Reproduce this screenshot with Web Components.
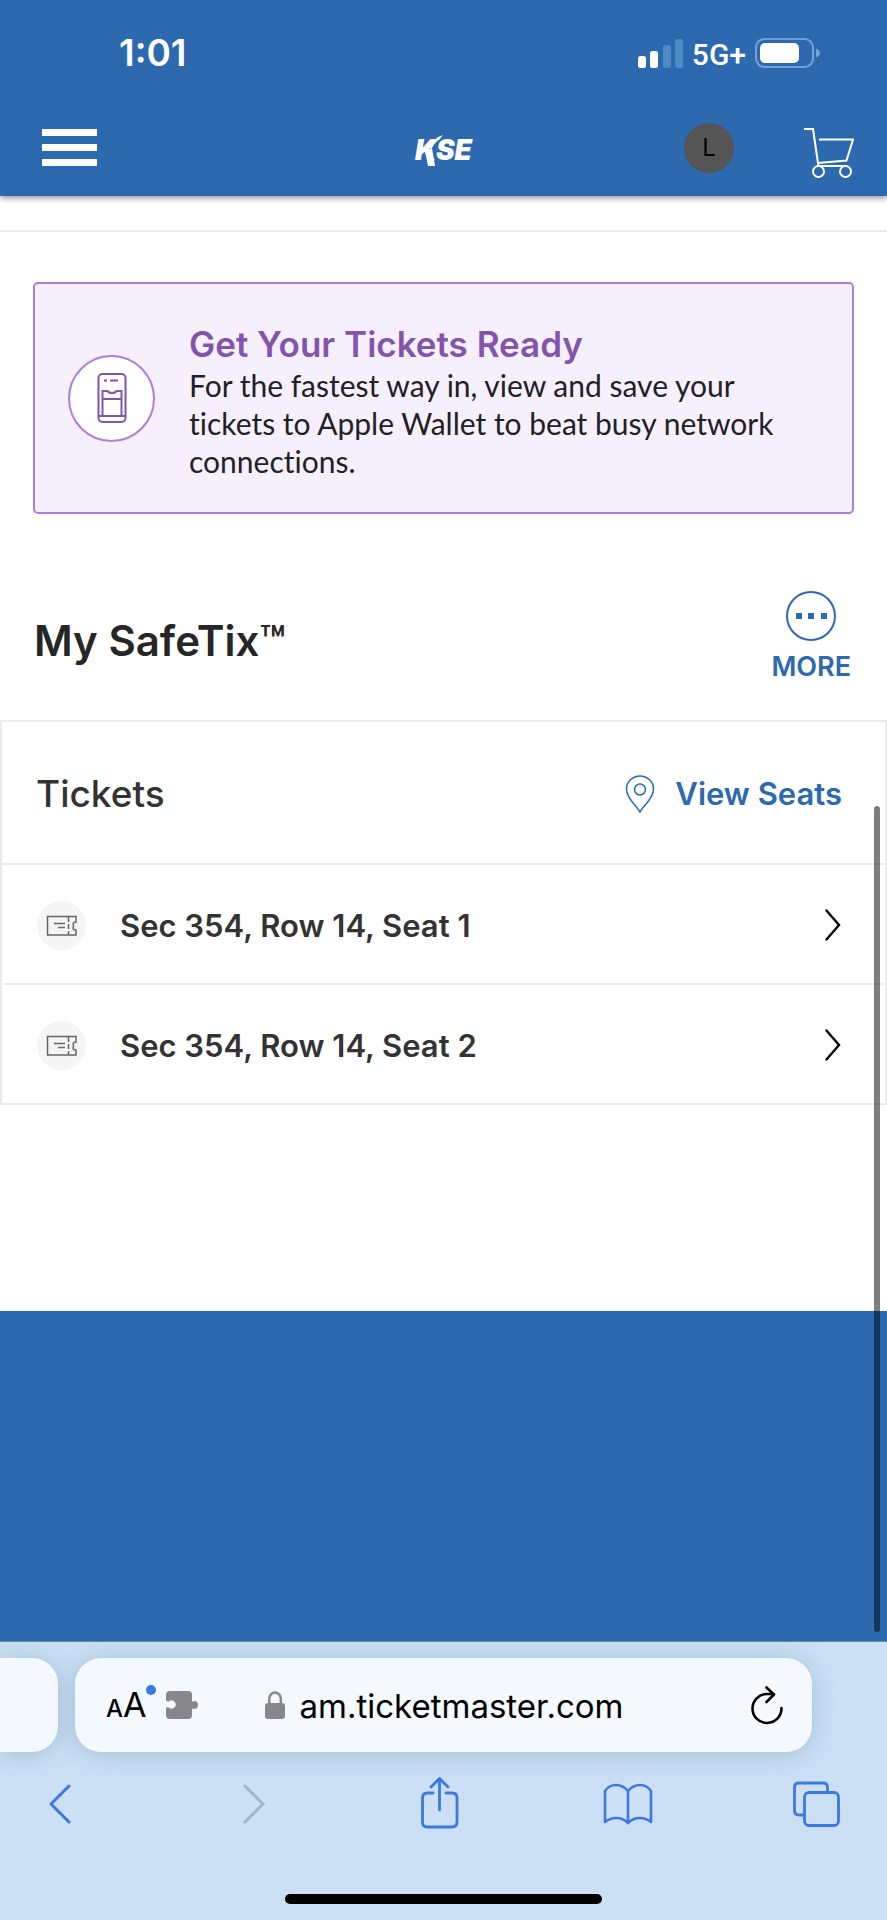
<!DOCTYPE html>
<html lang="en">
<head>
<meta charset="utf-8">
<meta name="viewport" content="width=device-width, initial-scale=1">
<title>My SafeTix</title>
<style>
  html, body { margin: 0; background: #cbe0f5; }
  body { font-family: Lato, "Open Sans", sans-serif; font-variant-ligatures: none; color: #262626; --heading: Inter, "Open Sans", sans-serif; }
</style>
</head>
<body>
<safe-app>
  <div slot="top">
    <status-bar></status-bar>
    <site-nav></site-nav>
  </div>
  <info-banner>
    <span slot="title">Get Your Tickets Ready</span>
    For the fastest way in, view and save your tickets to Apple Wallet to beat busy network connections.
  </info-banner>
  <section-title>My SafeTix™</section-title>
  <ticket-card>
    <span slot="title">Tickets</span>
    <ticket-row>Sec 354, Row 14, Seat 1</ticket-row>
    <ticket-row>Sec 354, Row 14, Seat 2</ticket-row>
  </ticket-card>
  <browser-bar slot="bottom"></browser-bar>
</safe-app>

<script>
const RESET = `
  :host, * { box-sizing: border-box; }
  button { border: 0; padding: 0; margin: 0; background: none; font: inherit; color: inherit; cursor: pointer; }
  a { color: inherit; text-decoration: none; }
  svg { display: block; flex: none; }
`;

function define(name, css, html) {
  const template = document.createElement('template');
  template.innerHTML = `<style>${RESET}${css}</style>${html}`;
  customElements.define(name, class extends HTMLElement {
    constructor() {
      super();
      this.attachShadow({ mode: 'open' }).append(template.content.cloneNode(true));
    }
  });
}

define('safe-app', `
  :host { display: flex; flex-direction: column; min-height: 100vh; position: relative; background: #2c69af; }
  header { background: #2c69af; box-shadow: 0 2px 6px rgba(40, 30, 70, .5); position: relative; z-index: 1; }
  main { background: #fff; padding-bottom: 206px; }
  .strip { height: 36px; border-bottom: 2px solid #ebebeb; }
  .fill { flex: 1; }
  .thumb { position: absolute; right: 7px; top: 42%; height: 43%; width: 6px; border-radius: 3px; background: rgba(0, 0, 0, .5); }
`, `
  <header><slot name="top"></slot></header>
  <main><div class="strip"></div><slot></slot></main>
  <div class="fill"></div>
  <slot name="bottom"></slot>
  <div class="thumb"></div>
`);

define('status-bar', `
  :host { display: flex; align-items: center; justify-content: space-between; padding: 6px 66px 0 119px; height: 99px; color: #fff; }
  .time { font: 600 37px/44px Inter, sans-serif; }
  .right { display: flex; align-items: center; gap: 9px; }
  .net { font: 500 30px/36px Roboto, sans-serif; padding-top: 4px; }
`, `
  <span class="time">1:01</span>
  <div class="right">
    <svg width="46" height="30" viewBox="0 0 46 30" fill="#fff">
      <rect x="1" y="18" width="8" height="12" rx="2.5"/>
      <rect x="13" y="13" width="8" height="17" rx="2.5"/>
      <rect x="26" y="7" width="8" height="23" rx="2.5" fill="#4e8ac4"/>
      <rect x="38" y="1" width="8" height="29" rx="2.5" fill="#4e8ac4"/>
    </svg>
    <span class="net">5G+</span>
    <svg width="66" height="30" viewBox="0 0 66 30">
      <rect x="1" y="1" width="57" height="28" rx="8.500" fill="none" stroke="#72a3d8" stroke-width="2"/>
      <rect x="5" y="5" width="39" height="20" rx="5" fill="#fff"/>
      <path d="M61 10.500q4 1 4 4.500t-4 4.500z" fill="#72a3d8"/>
    </svg>
  </div>
`);

define('site-nav', `
  :host { display: grid; grid-template-columns: 1fr auto 1fr; align-items: center; height: 97px; padding: 0 33px; }
  .menu { margin-left: 9px; justify-self: start; }
  .logo { position: relative; color: #fff; font: italic 900 28px/34px Inter, sans-serif; padding-top: 4px; }
  .logo svg { position: absolute; left: 0; top: 0; }
  .right { display: flex; align-items: center; justify-content: flex-end; gap: 70px; }
  .avatar { width: 50px; height: 50px; border-radius: 50%; background: #555; color: #000; font: 400 24px/50px Inter, sans-serif; text-align: center; }
`, `
  <button class="menu" aria-label="Menu">
    <svg width="55" height="38" viewBox="0 0 55 38" fill="#fff"><path d="M0 0h55v7H0zM0 15h55v7H0zM0 30h55v7H0z"/></svg>
  </button>
  <a class="logo" href="#">KSE
    <svg width="60" height="38" viewBox="0 0 60 38" fill="#fff"><path d="M11 20Q18 9 28 6l-4 5q-4 2-7 8zM10 22l7-3 3 18h-7z"/></svg>
  </a>
  <div class="right">
    <button class="avatar">L</button>
    <button aria-label="Cart">
      <svg width="50" height="62" viewBox="0 0 50 62" fill="none" stroke="#fff" stroke-width="2">
        <path d="M0 12h9l5.500 37.500M15 22.500h34l-6.500 21-28.500 2.500M14 49h29"/>
        <circle cx="14.500" cy="54.500" r="5.500"/><circle cx="41.500" cy="54.500" r="5.500"/>
      </svg>
    </button>
  </div>
`);

define('info-banner', `
  :host { display: flex; align-items: center; gap: 34px; margin: 50px 33px 0; padding: 32px 33px; background: #f6f0fd; border: 2px solid #b07ddb; border-radius: 5px; color: #221f26; }
  .badge { flex: none; width: 87px; height: 87px; border-radius: 50%; border: 2px solid #b07ddb; background: #fff; display: grid; place-items: center; }
  .text { padding-top: 6px; }
  h2 { margin: 0; font: 600 35px/44px var(--heading); color: #8354ac; }
  p { margin: 0; font-size: 30px; line-height: 38px; }
`, `
  <div class="badge">
    <svg width="30" height="50" viewBox="0 0 30 50" fill="none" stroke="#8354ac" stroke-width="2">
      <rect x="1.500" y="1" width="27" height="48" rx="4"/>
      <path d="M7 7.500h3M13 7.500h8" />
      <path d="M5.500 43V18h5q1 2 4.500 2t4.500-2h5v25M5.500 26h19M2 43h26"/>
    </svg>
  </div>
  <div class="text"><h2><slot name="title"></slot></h2><p><slot></slot></p></div>
`);

define('section-title', `
  :host { display: flex; align-items: center; justify-content: space-between; padding: 77px 36px 36px 34px; }
  h1 { margin: 0; padding-top: 6px; font: 600 42px/50px var(--heading); color: #262626; }
  button { display: flex; flex-direction: column; align-items: center; gap: 9px; color: #2c69af; font: 600 27px/34px var(--heading); }
`, `
  <h1><slot></slot></h1>
  <button>
    <svg width="50" height="50" viewBox="0 0 50 50"><circle cx="25" cy="25" r="24" fill="none" stroke="#2c69af" stroke-width="2"/><path d="M10 22h6v6h-6zM22 22h6v6h-6zM35 22h6v6h-6z" fill="#2c69af"/></svg>
    MORE
  </button>
`);

define('ticket-card', `
  :host { display: block; border: 2px solid #ebebeb; }
  .head { display: flex; align-items: center; justify-content: space-between; height: 143px; padding: 2px 43px 0 34px; border-bottom: 2px solid #ebebeb; }
  h2 { margin: 0; font: 500 37px/44px var(--heading); color: #333; }
  a { display: flex; align-items: center; gap: 20px; color: #2c69af; font: 600 31px/38px var(--heading); }
  ::slotted(ticket-row:not(:last-child)) { border-bottom: 2px solid #ebebeb; }
`, `
  <div class="head">
    <h2><slot name="title"></slot></h2>
    <a href="#">
      <svg width="30" height="38" viewBox="0 0 30 38" fill="none" stroke="#2c69af" stroke-width="1.500"><path d="M15 37C12 31 1.500 24 1.500 14A13.500 13 0 0 1 28.500 14C28.500 24 18 31 15 37z"/><circle cx="15" cy="14.500" r="5.500"/></svg>
      View Seats
    </a>
  </div>
  <slot></slot>
`);

define('ticket-row', `
  :host { display: block; margin: 0 2px; }
  a { display: flex; align-items: center; height: 118px; padding: 2px 42px 0 33px; gap: 34px; color: #333; font: 600 31px/38px var(--heading); }
  .label { flex: 1; padding-top: 2px; }
`, `
  <a href="#">
    <svg width="49" height="49" viewBox="0 0 49 49" fill="none" stroke="#666" stroke-width="1.500">
      <circle cx="24.500" cy="24.500" r="24.500" fill="#f5f5f5" stroke="none"/>
      <path d="M10.500 15.500h28.500v5.500q-4 0-2.500 4-1.500 4 2.500 4v5H10.500z"/>
      <path d="M17 22.500h11M21 26.500h7"/><path d="M31.500 16v18" stroke-dasharray="5 2"/>
    </svg>
    <span class="label"><slot></slot></span>
    <svg width="16" height="32" viewBox="0 0 16 32" fill="none" stroke="#000" stroke-width="2.400" stroke-linecap="round"><path d="M1.500 1.500l12.500 14.500L1.500 30.500"/></svg>
  </a>
`);

define('browser-bar', `
  :host { display: block; background: #cbe0f5; overflow: hidden; position: relative; font-family: Inter, sans-serif; color: #000; border-top: 1px solid #5f87b5; }
  .tabs { display: flex; gap: 17px; padding: 16px 75px 0 0; }
  .prev, .address { height: 94px; background: #f4f9fd; box-shadow: 0 2px 24px rgba(60, 100, 130, .28); }
  .prev { flex: none; width: 58px; border-radius: 0 26px 26px 0; }
  .address { flex: 1; min-width: 0; display: flex; align-items: center; border-radius: 26px; padding: 0 29px 0 31px; }
  .aa { position: relative; display: flex; align-items: baseline; padding-top: 4px; line-height: 40px; font-size: 34px; }
  .aa small { font-size: 24px; font-weight: 500; }
  .dot { position: absolute; right: -10px; top: 4px; width: 10px; height: 10px; border-radius: 50%; background: #3478f0; }
  .puzzle { margin-left: 20px; }
  label { display: flex; flex: 1; min-width: 0; align-items: center; gap: 14px; margin-left: 65px; }
  input { flex: 1; width: 100%; min-width: 0; border: 0; padding: 2px 0 0; background: none; font: 400 33px/44px Inter, sans-serif; color: #000; outline: 0; }
  nav { display: flex; justify-content: space-between; padding: 22px 41px 0 30px; }
  .home { width: 317px; height: 10px; border-radius: 5px; background: #000; margin: 60px auto 16px; }
`, `
  <div class="tabs">
    <div class="prev"></div>
    <div class="address">
      <button class="aa" aria-label="Page settings"><small>A</small>A<span class="dot"></span></button>
      <svg class="puzzle" width="34" height="28" viewBox="0 0 34 28" fill="#86868b"><path d="M4 0h18q4 0 4 4v6q1 1 2 0a4 4 0 1 1 0 8q-1-1-2 0v6q0 4-4 4H4q-4 0-4-4v-7q1-1 3-.5a4 4 0 1 0 0-6q-2 0-3-1V4q0-4 4-4z"/></svg>
      <label>
        <svg width="20" height="28" viewBox="0 0 20 28"><path d="M4.200 14V8a5.800 6.500 0 0 1 11.600 0v6" fill="none" stroke="#86868b" stroke-width="2.400"/><rect x="0" y="12" width="20" height="16" rx="3" fill="#86868b"/></svg>
        <input type="text" value="am.ticketmaster.com" aria-label="Address">
      </label>
      <button aria-label="Reload">
        <svg width="32" height="40" viewBox="0 0 32 40" fill="none" stroke="#000" stroke-width="2.600" stroke-linecap="round" stroke-linejoin="round"><path d="M30.500 23A14.500 14.500 0 1 1 16 9h6M15.500 2.500l7.500 7-7.500 7.500"/></svg>
      </button>
    </div>
  </div>
  <nav>
    <button aria-label="Back"><svg width="60" height="60" viewBox="0 0 60 60" fill="none" stroke="#3d78e0" stroke-width="3" stroke-linecap="round" stroke-linejoin="round"><path d="M39 12L21 30l18 18"/></svg></button>
    <button aria-label="Forward" disabled><svg width="60" height="60" viewBox="0 0 60 60" fill="none" stroke="#a3b4c4" stroke-width="3" stroke-linecap="round" stroke-linejoin="round"><path d="M26 12l18 18-18 18"/></svg></button>
    <button aria-label="Share"><svg width="60" height="60" viewBox="0 0 60 60" fill="none" stroke="#3d78e0" stroke-width="2.800" stroke-linecap="round" stroke-linejoin="round"><path d="M25 19h-5.500q-5 0-5 5v24q0 5 5 5h24.500q5 0 5-5V24q0-5-5-5H38M31.500 36V5M23 13l8.500-8.500L40 13"/></svg></button>
    <button aria-label="Bookmarks"><svg width="60" height="60" viewBox="0 0 60 60" fill="none" stroke="#3d78e0" stroke-width="2.600" stroke-linejoin="round"><path d="M31 17Q26 11 19 11T8 17v31q5-4 11.500-4T31 49q5-5 11.500-5T54 48V17q-4-6-11-6t-12 6v32"/></svg></button>
    <button aria-label="Tabs"><svg width="60" height="60" viewBox="0 0 60 60" fill="none" stroke="#3d78e0" stroke-width="2.800"><rect x="18.500" y="18.500" width="34" height="33" rx="4.500"/><path d="M18 41h-5q-4.500 0-4.500-4.500v-23Q8.500 9 13 9h24q4.500 0 4.500 4.500V18"/></svg></button>
  </nav>
  <div class="home"></div>
`);
</script>
</body>
</html>
